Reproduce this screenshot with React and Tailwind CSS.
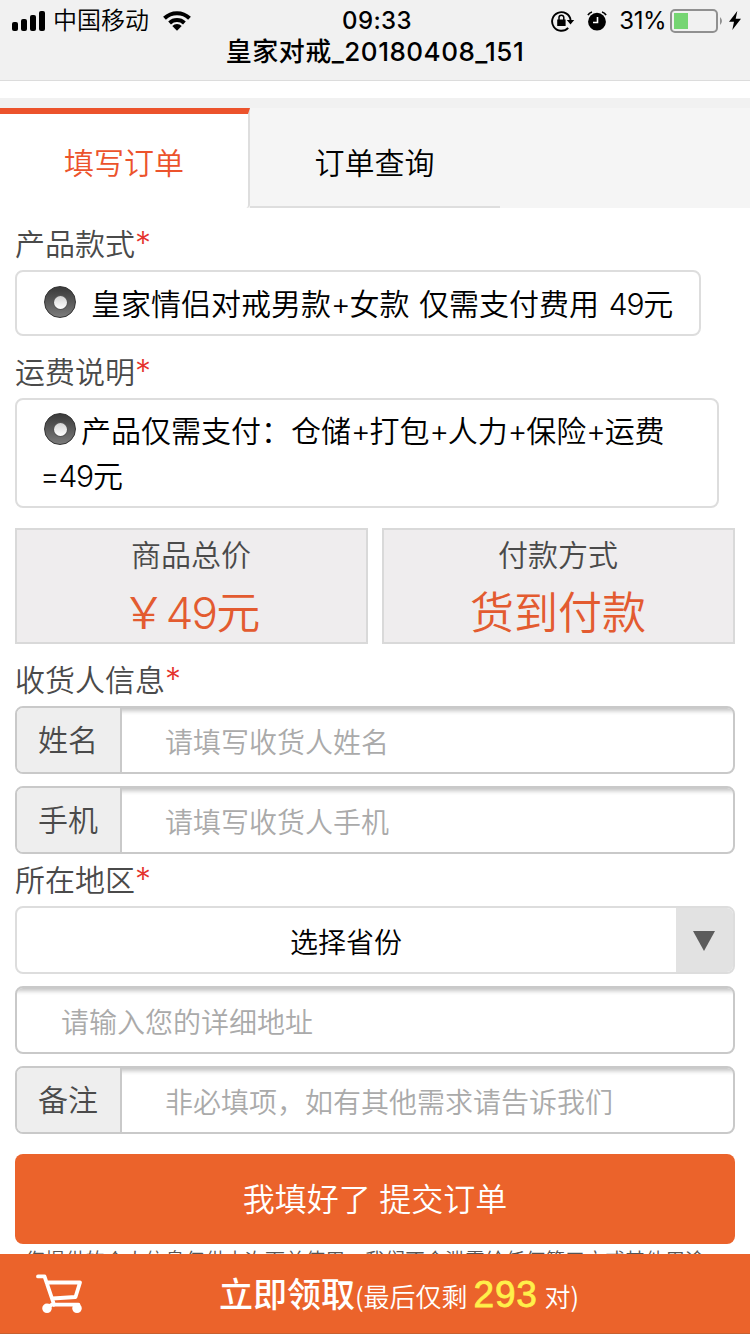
import React from "react";

function Latin({ children }) {
  return <span className="font-['Inter',sans-serif] font-light tracking-[-0.04em]">{children}</span>;
}

function Label({ children, className = "pt-2.5" }) {
  return (
    <div className={className}>
      <div className="h-[52px] text-[30px] leading-[48px] text-[#4a4a4a]">
        {children}
        <span className="font-['Inter',sans-serif] text-[32px] leading-none font-light text-[#e5322d]">*</span>
      </div>
    </div>
  );
}

function Radio() {
  return (
    <span className="mb-0.5 flex h-8 w-8 shrink-0 items-center justify-center rounded-full border border-[#333] bg-linear-to-b from-[#3a3a3a] to-[#7b7b7b]">
      <span className="h-[13px] w-[13px] rounded-full bg-linear-to-b from-[#d4d4d4] to-white shadow-[0_0_0_1px_#555]" />
    </span>
  );
}

function PriceCard({ title, children }) {
  return (
    <div className="h-[116px] flex-1 border-2 border-[#d9d9d9] bg-[#efedee] pr-px text-center">
      <div className="text-[30px] leading-[46px] text-[#4a4a4a]">{title}</div>
      <div className="pt-px text-[44px] leading-[66px] text-[#e35b30]">{children}</div>
    </div>
  );
}

function Field({ label, placeholder, className = "" }) {
  return (
    <div className={`flex h-[68px] overflow-hidden rounded-lg border-2 border-[#c9c9c9] ${className}`}>
      {label && (
        <div className="w-[105px] shrink-0 border-r-2 border-[#c9c9c9] bg-[#eee] pr-px text-center text-[30px] leading-[60px] text-[#4a4a4a]">
          {label}
        </div>
      )}
      <div className={`flex-1 text-[28px] leading-[66px] text-[#aaa] shadow-[inset_0_8px_4px_-5px_#c4c4c4] ${label ? "pl-[43px]" : "pl-[44px]"}`}>
        {placeholder}
      </div>
    </div>
  );
}

function StatusBar() {
  return (
    <header className="h-[81px] border-b border-[#dcdcdc] bg-[#f1f1f1] font-['Inter','Noto_Sans_CJK_SC',sans-serif] text-black">
      <div className="grid h-10 grid-cols-3 items-center">
        <div className="flex items-center pl-3">
          <svg width="33" height="20" viewBox="0 0 33 20">
            <rect x="0" y="11" width="6" height="9" rx="2" />
            <rect x="9" y="8" width="6" height="12" rx="2" />
            <rect x="18" y="4" width="6" height="16" rx="2" />
            <rect x="27" y="0" width="6" height="20" rx="2" />
          </svg>
          <span className="ml-2 pt-px text-[24px] leading-10 font-[350]">中国移动</span>
          <svg className="ml-3.5" width="28" height="20" viewBox="0 0 28 20">
            <path d="M1.5 7.2a18 18 0 0 1 25 0M6.6 12a10.8 10.8 0 0 1 14.8 0" fill="none" stroke="#000" strokeWidth="4" />
            <path d="M9.3 15a6.8 6.8 0 0 1 9.4 0L14 19.8z" />
          </svg>
        </div>
        <div className="pt-px pl-1 text-center text-[24px] leading-10 font-medium tracking-[0.4px]">09:33</div>
        <div className="flex items-center justify-end pr-[9px]">
          <svg width="24" height="22" viewBox="0 0 24 22">
            <path d="M17.2 17.8A9.3 9.3 0 1 1 19.6 10" fill="none" stroke="#000" strokeWidth="1.9" />
            <path d="M15.8 10h7.4l-3.7 4.4zM6.2 9.5h8.4V16H6.2z" />
            <path d="M8 10V7.6a2.4 2.4 0 0 1 4.8 0V10" fill="none" stroke="#000" strokeWidth="1.5" />
          </svg>
          <svg className="ml-3" width="20" height="20" viewBox="0 0 20 20">
            <circle cx="10" cy="10.7" r="8.9" />
            <path d="M1 4.2Q2 1.8 5 1M19 4.2Q18 1.8 15 1" fill="none" stroke="#000" strokeWidth="1.7" />
            <path d="M10.5 6v5.5H6" fill="none" stroke="#fff" strokeWidth="1.6" />
          </svg>
          <span className="ml-3 pt-px text-[24px] leading-10 font-normal tracking-[-0.5px]">31%</span>
          <svg className="ml-1" width="53" height="24" viewBox="0 0 53 24">
            <rect x="1" y="1" width="46" height="22" rx="4" fill="none" stroke="#909090" strokeWidth="2" />
            <rect x="4" y="4" width="14" height="16" fill="#75d572" />
            <path d="M50 8q4 4 0 8z" fill="#909090" />
          </svg>
          <svg className="ml-1.5" width="12" height="19" viewBox="0 0 12 19">
            <path d="M8.3 0L0 10.8h5L3.3 19 12 7.7H6.7z" />
          </svg>
        </div>
      </div>
      <div className="text-center text-[26px] leading-[24px] font-medium tracking-[0.5px]">皇家对戒_20180408_151</div>
    </header>
  );
}

export default function App() {
  return (
    <div className="flex h-[1334px] w-[750px] flex-col overflow-hidden bg-white font-['Noto_Sans_CJK_SC',sans-serif] font-[350] whitespace-nowrap">
      <StatusBar />
      <main className="min-h-0 flex-1 overflow-hidden">
        <div className="mt-[17px] h-2.5 bg-[#f1f1f1]" />
        <nav className="flex h-[100px] bg-[#f5f5f5] text-center text-[30px] leading-[106px]">
          <div className="w-[250px] rounded-br-[4px] border-t-[6px] border-r-2 border-t-[#ec532c] border-r-[#dedede] bg-white leading-[94px] text-[#ec532c]">
            填写订单
          </div>
          <div className="w-[250px] border-b-2 border-[#dedede] pr-px text-black">订单查询</div>
        </nav>
        <div className="px-[15px]">
          <Label>产品款式</Label>
          <div className="flex h-[66px] w-[686px] items-center rounded-lg border-2 border-[#ddd] pl-[27px] text-[30px] leading-[60px] text-black">
            <Radio />
            <span className="ml-[15px] [word-spacing:3px]">
              皇家情侣对戒男款<Latin>+</Latin>女款 仅需支付费用 <Latin>49</Latin>元
            </span>
          </div>
          <Label>运费说明</Label>
          <div className="h-[110px] w-[704px] rounded-lg border-2 border-[#ddd] pt-2 pl-[25px] text-[30px] leading-[44px] text-black">
            <div className="flex h-11 items-center pl-0.5">
              <Radio />
              <span className="ml-[5px]">
                产品仅需支付：仓储<Latin>+</Latin>打包<Latin>+</Latin>人力<Latin>+</Latin>保险<Latin>+</Latin>运费
              </span>
            </div>
            <div className="-ml-0.5">
              <Latin>=49</Latin>元
            </div>
          </div>
          <div className="mt-5 flex gap-3.5">
            <PriceCard title="商品总价">
              ￥<Latin>49</Latin>元
            </PriceCard>
            <PriceCard title="付款方式">货到付款</PriceCard>
          </div>
          <Label>收货人信息</Label>
          <Field label="姓名" placeholder="请填写收货人姓名" />
          <Field label="手机" placeholder="请填写收货人手机" className="mt-3" />
          <Label className="">所在地区</Label>
          <div className="flex h-[68px] overflow-hidden rounded-lg border-2 border-[#ddd]">
            <div className="flex-1 pr-px text-center text-[28px] leading-[66px] text-black">选择省份</div>
            <div className="flex w-[57px] items-center justify-center bg-[#e2e2e2] pt-0.5 pr-0.5">
              <svg width="22" height="20" viewBox="0 0 22 20">
                <path d="M0 0h22L11 20z" fill="#5c5c5c" />
              </svg>
            </div>
          </div>
          <Field placeholder="请输入您的详细地址" className="mt-3" />
          <Field label="备注" placeholder="非必填项，如有其他需求请告诉我们" className="mt-3" />
          <button className="mt-5 block h-[90px] w-full rounded-lg bg-[#eb632b] pb-1 text-[32px] leading-[84px] text-white [word-spacing:1.5px]">
            我填好了 提交订单
          </button>
          <p className="pl-2.5 text-[20px] leading-[31px] text-[#555]">
            您提供的个人信息仅供本次下单使用，我们不会泄露给任何第三方或其他用途
          </p>
        </div>
      </main>
      <footer className="flex h-20 shrink-0 items-center border-b border-[#c9602f] bg-[#eb632b] text-white">
        <svg className="ml-9 shrink-0" width="48" height="40" viewBox="0 0 48 40" fill="none" stroke="#fff" strokeWidth="3.8" strokeLinecap="round" strokeLinejoin="round">
          <path d="M2 2.4h6.5L17 27.5M10.5 8.5H44l-4.5 14.5-23 1.5M17 27.5L18 31M11 33.5l5-2.8H42.5" />
          <circle cx="11" cy="34.3" r="2.9" fill="#fff" />
          <circle cx="41" cy="34.3" r="2.9" fill="#fff" />
        </svg>
        <div className="mt-px ml-[135px] flex items-baseline leading-none">
          <span className="text-[34px] font-medium">立即领取</span>
          <span className="text-[26px]">(最后仅剩</span>
          <span className="mr-[7px] ml-[6px] font-['Liberation_Sans',sans-serif] text-[37px] tracking-[0.7px] text-[#fff04a] [-webkit-text-stroke:0.8px_#fff04a]">
            293
          </span>
          <span className="text-[26px]">对)</span>
        </div>
      </footer>
    </div>
  );
}
